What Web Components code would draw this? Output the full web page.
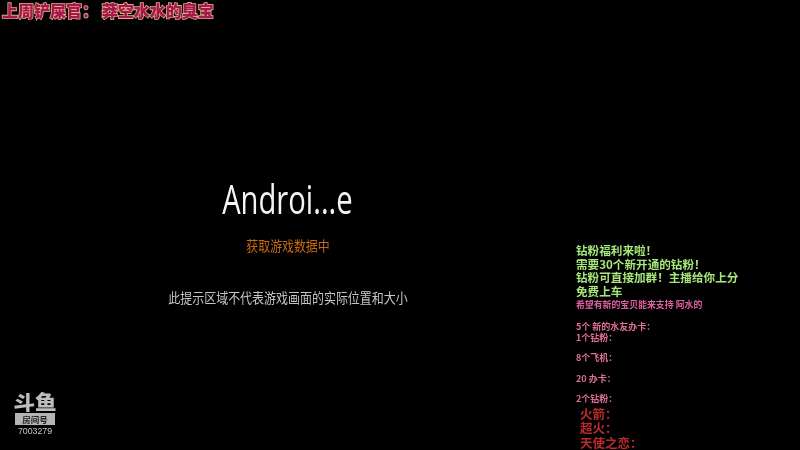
<!DOCTYPE html>
<html lang="zh">
<head>
<meta charset="utf-8">
<title>直播间</title>
<style>
    html, body { margin: 0; background: #000; }
</style>
</head>
<body>
<stream-stage>
    <top-banner slot="banner">上周铲屎官： 莽空水水的臭宝</top-banner>
    <game-prompt slot="prompt" name="Androi...e" status="获取游戏数据中" hint="此提示区域不代表游戏画面的实际位置和大小"></game-prompt>
    <room-badge slot="badge" room="7003279"></room-badge>
    <notice-panel slot="notice"></notice-panel>
</stream-stage>

<script>
const CJK = '"Noto Sans CJK SC", "Noto Sans", sans-serif';

class StreamStage extends HTMLElement {
    constructor() {
        super();
        this.attachShadow({ mode: 'open' }).innerHTML = `
            <style>
                :host {
                    display: flex;
                    flex-direction: column;
                    width: 800px;
                    height: 450px;
                    overflow: hidden;
                    background: #000;
                }
                .main { flex: 1; display: flex; min-height: 0; }
                .left { width: 575px; display: flex; flex-direction: column; padding-top: 155px; box-sizing: border-box; }
                .bottom { margin-top: auto; padding: 0 0 13px 13px; }
                .right { flex: 1; padding-top: 222px; }
            </style>
            <slot name="banner"></slot>
            <div class="main">
                <div class="left">
                    <slot name="prompt"></slot>
                    <div class="bottom"><slot name="badge"></slot></div>
                </div>
                <div class="right"><slot name="notice"></slot></div>
            </div>
        `;
    }
}

class TopBanner extends HTMLElement {
    constructor() {
        super();
        this.attachShadow({ mode: 'open' }).innerHTML = `
            <style>
                :host {
                    display: block;
                    height: 22px;
                    padding: 0 0 0 2px;
                    font: 900 16px/21px ${CJK};
                    color: #a8164f;
                    white-space: nowrap;
                }
                span {
                    -webkit-text-stroke: 1.6px #dcae84;
                    paint-order: stroke fill;
                    filter: blur(.4px);
                    display: inline-block;
                }
            </style>
            <span><slot></slot></span>
        `;
    }
}

class GamePrompt extends HTMLElement {
    constructor() {
        super();
        this.attachShadow({ mode: 'open' }).innerHTML = `
            <style>
                :host { display: flex; flex-direction: column; align-items: center; filter: blur(.35px); }
                .name { font: 40px/44px "Open Sans", "Noto Sans", sans-serif; color: #f4f4f4; transform: scaleX(.73); }
                .status { margin-top: 15px; font: 14px/18px ${CJK}; color: #c96a10; transform: scaleX(.85); }
                .hint { margin-top: 34px; font: 14px/18px ${CJK}; color: #c4c4c4; transform: scaleX(.855); }
            </style>
            <div class="name"></div>
            <div class="status"></div>
            <div class="hint"></div>
        `;
        this.shadowRoot.querySelector('.name').innerText = this.getAttribute('name');
        this.shadowRoot.querySelector('.status').innerText = this.getAttribute('status');
        this.shadowRoot.querySelector('.hint').innerText = this.getAttribute('hint');
    }
}

class RoomBadge extends HTMLElement {
    constructor() {
        super();
        this.attachShadow({ mode: 'open' }).innerHTML = `
            <style>
                :host { display: flex; flex-direction: column; align-items: center; width: 44px; color: #c8c8c8; filter: blur(.4px); }
                .logo { font: 900 20px/21px ${CJK}; white-space: nowrap; color: #bdbdbd; transform: scaleX(1.08); }
                .tag { background: #b4b4b4; color: #222; font: 700 8.5px/12px ${CJK}; width: 40px; text-align: center; margin-top: 1px; }
                .room { font: 8.8px/11px "Liberation Sans", sans-serif; margin-top: 1px; }
            </style>
            <div class="logo">斗鱼</div>
            <div class="tag">房间号</div>
            <div class="room"></div>
        `;
        this.shadowRoot.querySelector('.room').innerText = this.getAttribute('room');
    }
}

class NoticeLine extends HTMLElement {
    constructor() {
        super();
        this.attachShadow({ mode: 'open' }).innerHTML = `
            <style>
                :host { display: block; white-space: nowrap; font-family: ${CJK}; font-weight: 700; }
                :host([tone="green"]) { color: #a6e67a; font-size: 11.6px; line-height: 13.7px; }
                :host([tone="pink"]) { color: #e0609f; font-size: 8.9px; line-height: 11px; }
                :host([tone="rose"]) { color: #df6f96; font-size: 9px; line-height: 11px; }
                :host([tone="red"]) { color: #bb2a2c; font-size: 12.5px; line-height: 14.3px; padding-left: 4px; }
                :host([gap="a"]) { margin-top: 10.7px; }
                :host([gap="b"]) { margin-top: 9.5px; }
                :host([gap="c"]) { margin-top: 3px; }
            </style>
            <slot></slot>
        `;
    }
}

class NoticePanel extends HTMLElement {
    constructor() {
        super();
        this.attachShadow({ mode: 'open' }).innerHTML = `
            <style>
                :host { display: block; padding-left: 1px; filter: blur(.35px); }
            </style>
            <notice-line tone="green">钻粉福利来啦！</notice-line>
            <notice-line tone="green">需要30个新开通的钻粉！</notice-line>
            <notice-line tone="green">钻粉可直接加群！主播给你上分</notice-line>
            <notice-line tone="green">免费上车</notice-line>
            <notice-line tone="pink">希望有新的宝贝能来支持 阿水的</notice-line>
            <notice-line tone="rose" gap="a">5个 新的水友办卡：</notice-line>
            <notice-line tone="rose">1个钻粉：</notice-line>
            <notice-line tone="rose" gap="b">8个飞机：</notice-line>
            <notice-line tone="rose" gap="b">20 办卡：</notice-line>
            <notice-line tone="rose" gap="b">2个钻粉：</notice-line>
            <notice-line tone="red" gap="c">火箭：</notice-line>
            <notice-line tone="red">超火：</notice-line>
            <notice-line tone="red">天使之恋：</notice-line>
        `;
    }
}

window.customElements.define('stream-stage', StreamStage);
window.customElements.define('top-banner', TopBanner);
window.customElements.define('game-prompt', GamePrompt);
window.customElements.define('room-badge', RoomBadge);
window.customElements.define('notice-line', NoticeLine);
window.customElements.define('notice-panel', NoticePanel);
</script>
</body>
</html>
